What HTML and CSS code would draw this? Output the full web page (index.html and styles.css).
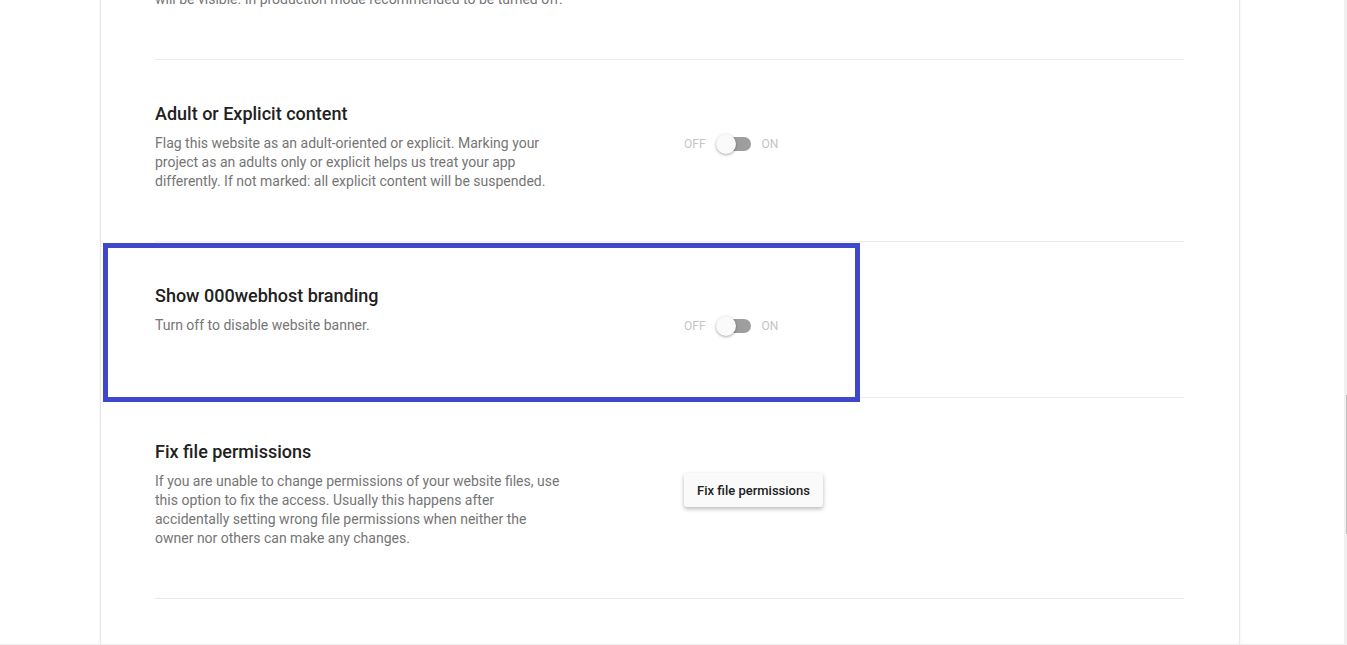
FILE: index.html
```html
<!DOCTYPE html>
<html lang="en">
<head>
<meta charset="utf-8">
<title>Website settings</title>
<link rel="stylesheet" href="styles.css">
</head>
<body>
<main class="panel">
  <section class="setting setting-first">
    <div class="info">
      <p class="desc">will be visible. In production mode recommended to be turned off.</p>
    </div>
  </section>
  <section class="setting">
    <div class="info">
      <h2 class="title" id="adult">Adult or Explicit content</h2>
      <p class="desc">Flag this website as an adult-oriented or explicit. Marking your project as an adults only or explicit helps us treat your app differently. If not marked: all explicit content will be suspended.</p>
    </div>
    <label class="switch"><span>OFF</span><input type="checkbox" role="switch" class="toggle" aria-labelledby="adult"><span>ON</span></label>
  </section>
  <section class="setting setting-branding">
    <div class="info">
      <h2 class="title" id="branding">Show 000webhost branding</h2>
      <p class="desc">Turn off to disable website banner.</p>
    </div>
    <label class="switch"><span>OFF</span><input type="checkbox" role="switch" class="toggle" aria-labelledby="branding"><span>ON</span></label>
    <div class="highlight"></div>
  </section>
  <section class="setting">
    <div class="info">
      <h2 class="title">Fix file permissions</h2>
      <p class="desc">If you are unable to change permissions of your website files, use this option to fix the access. Usually this happens after accidentally setting wrong file permissions when neither the owner nor others can make any changes.</p>
    </div>
    <div class="action"><button class="button" type="button">Fix file permissions</button></div>
  </section>
</main>
<div class="scroll-track"><div class="scroll-thumb"></div></div>
</body>
</html>
```
FILE: styles.css
```css
* { box-sizing: border-box; }
html { height: 100%; overflow: hidden; }
body {
  height: 100%;
  margin: 0;
  padding: 0 107px 0 100px;
  overflow: hidden;
  background: #fff;
  border-bottom: 1px solid #ececec;
  font-family: Roboto, "Liberation Sans", sans-serif;
}
.panel {
  display: flow-root;
  min-height: 100%;
  padding: 0 55px 0 54px;
  border: solid #e0ebe9;
  border-width: 0 1px;
  box-shadow: 0 0 2px #e8f1f0;
}
.setting {
  position: relative;
  display: grid;
  grid-template-columns: 410px 1fr;
  column-gap: 119px;
  align-items: start;
  padding: 42px 0 50px;
  border-bottom: 1px solid #ececec;
}
.setting-first {
  margin-top: -10px;
  padding-top: 0;
}
.setting-branding { min-height: 156px; }
.title {
  margin: 0 0 8px;
  color: #212121;
  font-size: 18px;
  font-weight: 500;
  line-height: 24px;
}
.desc {
  margin: 0;
  color: #757575;
  font-size: 14px;
  line-height: 19px;
}
.switch {
  display: flex;
  align-items: center;
  gap: 10px;
  height: 24px;
  margin-top: 30px;
  color: #c4c4c4;
  font-size: 12px;
}
.toggle {
  appearance: none;
  position: relative;
  width: 36px;
  height: 20px;
  margin: 0;
}
.toggle::before {
  content: "";
  position: absolute;
  inset: 3px 1px 3px 2px;
  border-radius: 7px;
  background: #9e9e9e;
}
.toggle::after {
  content: "";
  position: absolute;
  top: 0;
  left: 0;
  width: 20px;
  height: 20px;
  border-radius: 50%;
  background: #fafafa;
  box-shadow: 0 1px 3px rgba(0, 0, 0, .35);
}
.action { margin-top: 33px; }
.button {
  min-width: 139px;
  height: 34px;
  padding: 0 11px;
  border: 0;
  border-radius: 3px;
  background: #fafafa;
  box-shadow: 0 2px 4px rgba(0, 0, 0, .28);
  color: #212121;
  font: 500 13px Roboto, "Liberation Sans", sans-serif;
}
.highlight {
  position: absolute;
  top: 1px;
  left: -52px;
  width: 757px;
  height: 159px;
  border: 5px solid #3f48cc;
  pointer-events: none;
}
.scroll-track {
  position: fixed;
  top: 0;
  right: 0;
  bottom: 0;
  width: 3px;
  background: #f0f0f0;
}
.scroll-thumb {
  position: absolute;
  top: 395px;
  right: 0;
  width: 1px;
  height: 139px;
  background: #c0c0c0;
}
```
